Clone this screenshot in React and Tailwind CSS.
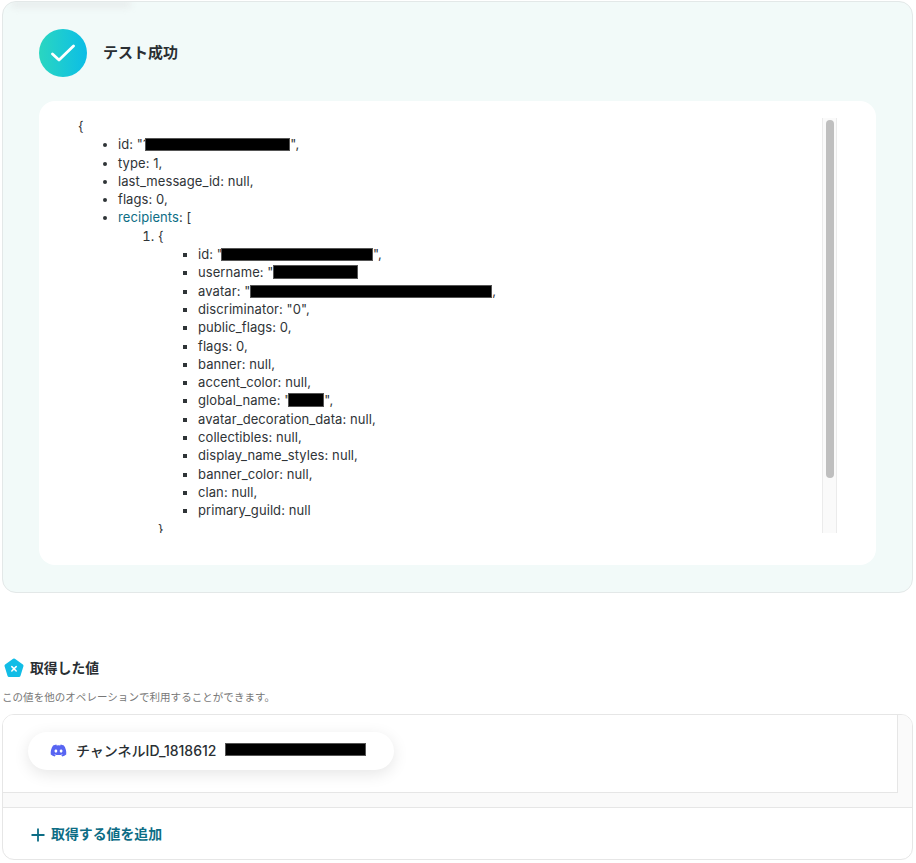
import { FaDiscord } from "react-icons/fa6";

const FONT = "font-['Inter','Noto_Sans_CJK_JP',sans-serif]";

function Mask({ className }) {
  return <span className={`inline-block bg-black align-[-2px] border border-[#555] ${className}`} />;
}

function Recipient() {
  return (
    <ul className="list-[square] pl-10">
      <li>
        id: "<Mask className="w-[152px] h-[13px] -ml-[2px]" />",
      </li>
      <li>
        username: "<Mask className="w-[85px] h-[14px] -ml-px" />
      </li>
      <li>
        avatar: "<Mask className="w-[242px] h-[13px]" />,
      </li>
      <li>discriminator: "0",</li>
      <li>public_flags: 0,</li>
      <li>flags: 0,</li>
      <li>banner: null,</li>
      <li>accent_color: null,</li>
      <li>
        global_name: "<Mask className="w-[36px] h-[14px] -ml-[2px]" />",
      </li>
      <li>avatar_decoration_data: null,</li>
      <li>collectibles: null,</li>
      <li>display_name_styles: null,</li>
      <li>banner_color: null,</li>
      <li>clan: null,</li>
      <li>primary_guild: null</li>
    </ul>
  );
}

function TestResult() {
  return (
    <section className="relative mt-px ml-[2px] w-[911px] h-[592px] rounded-[14px] border border-[#e3e8e8] bg-[#f2faf9] pl-9 pr-9 pt-[27px] overflow-hidden">
      <div className="absolute left-[8px] -top-[2px] w-[120px] h-[8px] rounded-full bg-[#e8eded] blur-[3px]" />
      <div className="relative flex items-center gap-4 h-12">
        <div className="w-12 h-12 rounded-full bg-gradient-to-r from-[#2ad6c0] to-[#0cbde6] flex items-center justify-center">
          <svg width="24" height="18" viewBox="0 0 24 18" fill="none">
            <path
              d="M1.5 10 L8 16 L22.5 2"
              stroke="white"
              strokeWidth="2.8"
              strokeLinecap="round"
              strokeLinejoin="round"
            />
          </svg>
        </div>
        <h2 className="text-[15px] font-semibold text-[#2a2f33]">テスト成功</h2>
      </div>
      <div className="mt-6 h-[464px] rounded-2xl bg-white pl-[39px] pr-[39px] pt-[17px] pb-8 flex">
        <div className="flex-1 min-w-0 overflow-hidden text-[13px] tracking-[0.08px] leading-[18.3px] text-[#2f3437] -mt-px">
          <div>{"{"}</div>
          <ul className="list-disc pl-10">
            <li>
              id: "1<Mask className="w-[145px] h-[13px] -ml-[3px]" />",
            </li>
            <li>type: 1,</li>
            <li>last_message_id: null,</li>
            <li>flags: 0,</li>
            <li>
              <span className="text-[#0d6d85]">recipients</span>: [
              <ol className="list-decimal pl-10">
                <li>
                  {"{"}
                  <Recipient />
                  {"}"}
                </li>
              </ol>
            </li>
          </ul>
        </div>
        <div className="w-[15px] shrink-0 border-x border-[#ebebeb] bg-[#fafafa] pl-[3px] pt-[2px]">
          <div className="w-2 h-[358px] rounded-full bg-[#bfbfbf]" />
        </div>
      </div>
    </section>
  );
}

function FetchedValues() {
  return (
    <section className="mt-[65px]">
      <div className="flex items-center gap-[6px] pl-1 h-5">
        <svg width="20" height="20" viewBox="0 0 20 20">
          <path
            d="M10 2 L18 7.8 L15 17.5 L5 17.5 L2 7.8 Z"
            fill="#12bde6"
            stroke="#12bde6"
            strokeWidth="3"
            strokeLinejoin="round"
          />
          <path
            d="M7.8 8.6 L12.2 13 M12.2 8.6 L7.8 13"
            stroke="white"
            strokeWidth="1.5"
            strokeLinecap="round"
          />
        </svg>
        <h3 className="text-[13.8px] font-semibold text-[#2a2f33]">取得した値</h3>
      </div>
      <p className="mt-[12px] pl-[2px] text-[10.5px] tracking-[0.05px] leading-[16px] text-[#777]">
        この値を他のオペレーションで利用することができます。
      </p>
      <div className="mt-[8px] ml-[2px] w-[911px] h-[146px] rounded-[12px] border border-[#e6e6e6] overflow-hidden flex flex-col">
        <div className="flex bg-[#fafafa] h-[93px] border-b border-[#e6e6e6]">
          <div className="w-[895px] h-[78px] bg-white border-r border-b border-[#e6e6e6] pl-[25px] pt-[17px]">
            <div className="flex items-center w-[366px] h-[38px] rounded-full bg-white shadow-[0_4px_16px_rgba(0,0,0,0.1)] pl-[22px]">
              <FaDiscord className="text-[#5865f2] text-[17px] -mt-px" />
              <span className="ml-[9px] text-[14px] font-medium text-[#2a2f33] -mt-px">
                チャンネルID_1818612
              </span>
              <span className="ml-[9px] mb-[4px] w-[141px] h-[13px] bg-black border border-[#555]" />
            </div>
          </div>
        </div>
        <button className="flex items-center gap-[6px] pl-7 pt-[2px] h-[51px] text-[13.9px] font-semibold text-[#0d6d85]">
          <svg width="14" height="14" viewBox="0 0 14 14">
            <path d="M7 0.5 V13.5 M0.5 7 H13.5" stroke="#0d6d85" strokeWidth="1.8" />
          </svg>
          取得する値を追加
        </button>
      </div>
    </section>
  );
}

export default function App() {
  return (
    <div className={`w-[916px] h-[863px] bg-white overflow-hidden ${FONT}`}>
      <TestResult />
      <FetchedValues />
    </div>
  );
}
